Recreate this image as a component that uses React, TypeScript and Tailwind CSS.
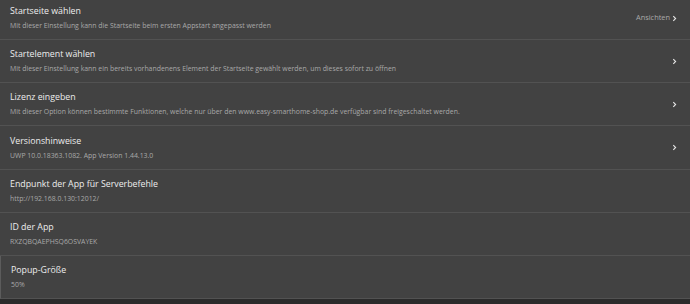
import React from 'react';

type Setting = {
  title: string;
  desc: string;
  value?: string;
  chevron?: boolean;
  active?: boolean;
  tall?: boolean;
};

const settings: Setting[] = [
  {
    title: 'Startseite wählen',
    desc: 'Mit dieser Einstellung kann die Startseite beim ersten Appstart angepasst werden',
    value: 'Ansichten',
    chevron: true,
  },
  {
    title: 'Startelement wählen',
    desc: 'Mit dieser Einstellung kann ein bereits vorhandenens Element der Startseite gewählt werden, um dieses sofort zu öffnen',
    chevron: true,
  },
  {
    title: 'Lizenz eingeben',
    desc: 'Mit dieser Option können bestimmte Funktionen, welche nur über den www.easy-smarthome-shop.de verfügbar sind freigeschaltet werden.',
    chevron: true,
  },
  {
    title: 'Versionshinweise',
    desc: 'UWP 10.0.18363.1082. App Version 1.44.13.0',
    chevron: true,
    tall: true,
  },
  { title: 'Endpunkt der App für Serverbefehle', desc: 'http://192.168.0.130:12012/' },
  { title: 'ID der App', desc: 'RXZQBQAEPHSQ6OSVAYEK' },
  { title: 'Popup-Größe', desc: '50%', active: true },
];

const Chevron: React.FC = () => (
  <svg width="5" height="7" viewBox="0 0 5 7" className="shrink-0">
    <path d="M1.3 1.2 L3.6 3.5 L1.3 5.8" fill="none" stroke="#e6e6e6" strokeWidth="1.1" />
  </svg>
);

const SettingRow: React.FC<{ s: Setting }> = ({ s }) => (
  <div
    className={
      'flex items-center border-b border-[#525252] pl-[10px] pr-[13px] ' +
      (s.tall ? 'h-[44px] ' : 'h-[43px] ') +
      (s.active ? 'border-l border-l-[#5c5c5c] pl-[9px]' : '')
    }
  >
    <div className="flex min-w-0 flex-1 flex-col gap-[5px]">
      <div className="text-[8.8px] leading-[11px] text-[#ededed]">{s.title}</div>
      <div className="truncate text-[6.9px] leading-[8px] text-[#a9a9a9]">{s.desc}</div>
    </div>
    {s.value && <span className="mr-[2px] text-[7.4px] text-[#a9a9a9]">{s.value}</span>}
    {s.chevron && <Chevron />}
  </div>
);

export default function App() {
  return (
    <div
      className="h-[304px] w-[690px] overflow-hidden bg-[#2b2b2b]"
      style={{ fontFamily: '"Open Sans", "Noto Sans", sans-serif' }}
    >
      <div className="-mt-[3px] bg-[#424242]">
        {settings.map((s) => (
          <SettingRow key={s.title} s={s} />
        ))}
      </div>
    </div>
  );
}
